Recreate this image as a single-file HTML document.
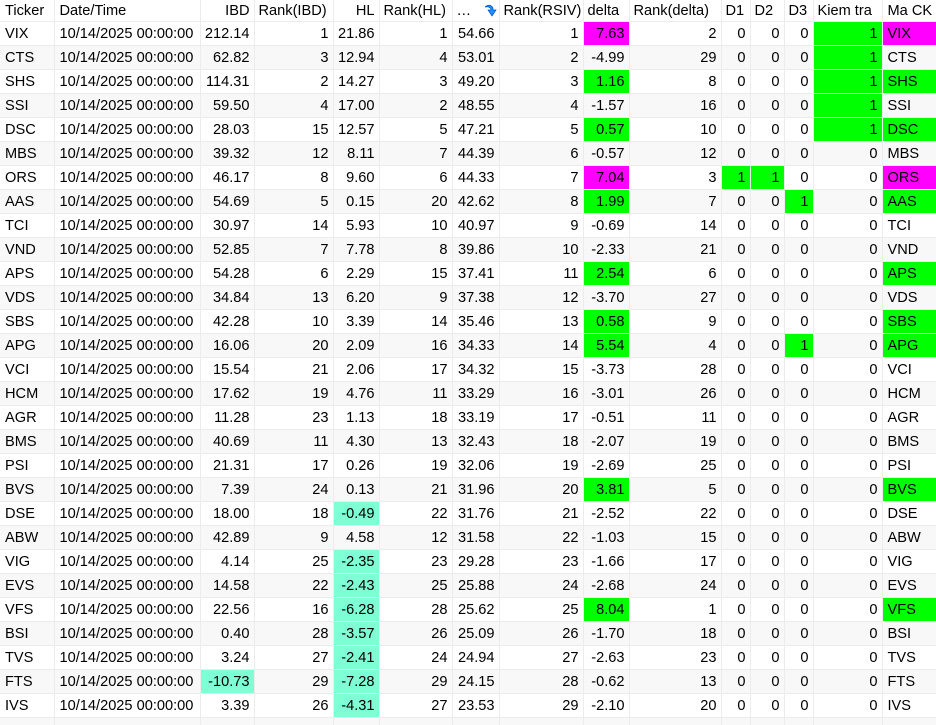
<!DOCTYPE html>
<html><head><meta charset="utf-8"><style>
html,body{margin:0;height:725px;overflow:hidden}
body{background:#fff;font-family:"Liberation Sans",sans-serif;font-size:14.6px;color:#000;}
table{border-collapse:collapse;table-layout:fixed;width:936px;}
td{height:23px;padding:0 4px;border-right:1px solid #ececec;border-bottom:1px solid #ececec;text-align:right;white-space:nowrap;overflow:hidden;}
tr:first-child td{height:21px;text-align:left;background:#fff;}
tr:nth-child(odd) td{background:#f8f8f8;}
tr:first-child td{background:#fff}
td:nth-child(1),td:nth-child(2),td:nth-child(15){text-align:left;padding-left:5px}
tr:first-child td.r{text-align:right}
tr td.m{background:#ff00ff}
tr td.g{background:#00ff00}
tr td.a{background:#7fffd4}
</style></head><body>
<table>
<colgroup><col style="width:54px"><col style="width:146px"><col style="width:54px"><col style="width:79px"><col style="width:46px"><col style="width:73px"><col style="width:47px"><col style="width:84px"><col style="width:46px"><col style="width:92px"><col style="width:29px"><col style="width:34px"><col style="width:29px"><col style="width:69px"><col style="width:54px"></colgroup>
<tr><td>Ticker</td><td>Date/Time</td><td class="r">IBD</td><td>Rank(IBD)</td><td class="r">HL</td><td>Rank(HL)</td><td>… <svg width="14" height="14" viewBox="0 0 14 14" style="vertical-align:-2px;margin-left:8px"><path d="M2 4 Q7 0 10 5 L10 7 L13 7 L9 13 L5 7 L8 7 L8 6 Q6 3 2 4Z" fill="#1e90ff" stroke="#0050c0" stroke-width="0.7"/></svg></td><td>Rank(RSIV)</td><td>delta</td><td>Rank(delta)</td><td>D1</td><td>D2</td><td>D3</td><td>Kiem tra</td><td>Ma CK</td></tr>
<tr><td>VIX</td><td>10/14/2025 00:00:00</td><td>212.14</td><td>1</td><td>21.86</td><td>1</td><td>54.66</td><td>1</td><td class="m">7.63</td><td>2</td><td>0</td><td>0</td><td>0</td><td class="g">1</td><td class="m">VIX</td></tr>
<tr><td>CTS</td><td>10/14/2025 00:00:00</td><td>62.82</td><td>3</td><td>12.94</td><td>4</td><td>53.01</td><td>2</td><td>-4.99</td><td>29</td><td>0</td><td>0</td><td>0</td><td class="g">1</td><td>CTS</td></tr>
<tr><td>SHS</td><td>10/14/2025 00:00:00</td><td>114.31</td><td>2</td><td>14.27</td><td>3</td><td>49.20</td><td>3</td><td class="g">1.16</td><td>8</td><td>0</td><td>0</td><td>0</td><td class="g">1</td><td class="g">SHS</td></tr>
<tr><td>SSI</td><td>10/14/2025 00:00:00</td><td>59.50</td><td>4</td><td>17.00</td><td>2</td><td>48.55</td><td>4</td><td>-1.57</td><td>16</td><td>0</td><td>0</td><td>0</td><td class="g">1</td><td>SSI</td></tr>
<tr><td>DSC</td><td>10/14/2025 00:00:00</td><td>28.03</td><td>15</td><td>12.57</td><td>5</td><td>47.21</td><td>5</td><td class="g">0.57</td><td>10</td><td>0</td><td>0</td><td>0</td><td class="g">1</td><td class="g">DSC</td></tr>
<tr><td>MBS</td><td>10/14/2025 00:00:00</td><td>39.32</td><td>12</td><td>8.11</td><td>7</td><td>44.39</td><td>6</td><td>-0.57</td><td>12</td><td>0</td><td>0</td><td>0</td><td>0</td><td>MBS</td></tr>
<tr><td>ORS</td><td>10/14/2025 00:00:00</td><td>46.17</td><td>8</td><td>9.60</td><td>6</td><td>44.33</td><td>7</td><td class="m">7.04</td><td>3</td><td class="g">1</td><td class="g">1</td><td>0</td><td>0</td><td class="m">ORS</td></tr>
<tr><td>AAS</td><td>10/14/2025 00:00:00</td><td>54.69</td><td>5</td><td>0.15</td><td>20</td><td>42.62</td><td>8</td><td class="g">1.99</td><td>7</td><td>0</td><td>0</td><td class="g">1</td><td>0</td><td class="g">AAS</td></tr>
<tr><td>TCI</td><td>10/14/2025 00:00:00</td><td>30.97</td><td>14</td><td>5.93</td><td>10</td><td>40.97</td><td>9</td><td>-0.69</td><td>14</td><td>0</td><td>0</td><td>0</td><td>0</td><td>TCI</td></tr>
<tr><td>VND</td><td>10/14/2025 00:00:00</td><td>52.85</td><td>7</td><td>7.78</td><td>8</td><td>39.86</td><td>10</td><td>-2.33</td><td>21</td><td>0</td><td>0</td><td>0</td><td>0</td><td>VND</td></tr>
<tr><td>APS</td><td>10/14/2025 00:00:00</td><td>54.28</td><td>6</td><td>2.29</td><td>15</td><td>37.41</td><td>11</td><td class="g">2.54</td><td>6</td><td>0</td><td>0</td><td>0</td><td>0</td><td class="g">APS</td></tr>
<tr><td>VDS</td><td>10/14/2025 00:00:00</td><td>34.84</td><td>13</td><td>6.20</td><td>9</td><td>37.38</td><td>12</td><td>-3.70</td><td>27</td><td>0</td><td>0</td><td>0</td><td>0</td><td>VDS</td></tr>
<tr><td>SBS</td><td>10/14/2025 00:00:00</td><td>42.28</td><td>10</td><td>3.39</td><td>14</td><td>35.46</td><td>13</td><td class="g">0.58</td><td>9</td><td>0</td><td>0</td><td>0</td><td>0</td><td class="g">SBS</td></tr>
<tr><td>APG</td><td>10/14/2025 00:00:00</td><td>16.06</td><td>20</td><td>2.09</td><td>16</td><td>34.33</td><td>14</td><td class="g">5.54</td><td>4</td><td>0</td><td>0</td><td class="g">1</td><td>0</td><td class="g">APG</td></tr>
<tr><td>VCI</td><td>10/14/2025 00:00:00</td><td>15.54</td><td>21</td><td>2.06</td><td>17</td><td>34.32</td><td>15</td><td>-3.73</td><td>28</td><td>0</td><td>0</td><td>0</td><td>0</td><td>VCI</td></tr>
<tr><td>HCM</td><td>10/14/2025 00:00:00</td><td>17.62</td><td>19</td><td>4.76</td><td>11</td><td>33.29</td><td>16</td><td>-3.01</td><td>26</td><td>0</td><td>0</td><td>0</td><td>0</td><td>HCM</td></tr>
<tr><td>AGR</td><td>10/14/2025 00:00:00</td><td>11.28</td><td>23</td><td>1.13</td><td>18</td><td>33.19</td><td>17</td><td>-0.51</td><td>11</td><td>0</td><td>0</td><td>0</td><td>0</td><td>AGR</td></tr>
<tr><td>BMS</td><td>10/14/2025 00:00:00</td><td>40.69</td><td>11</td><td>4.30</td><td>13</td><td>32.43</td><td>18</td><td>-2.07</td><td>19</td><td>0</td><td>0</td><td>0</td><td>0</td><td>BMS</td></tr>
<tr><td>PSI</td><td>10/14/2025 00:00:00</td><td>21.31</td><td>17</td><td>0.26</td><td>19</td><td>32.06</td><td>19</td><td>-2.69</td><td>25</td><td>0</td><td>0</td><td>0</td><td>0</td><td>PSI</td></tr>
<tr><td>BVS</td><td>10/14/2025 00:00:00</td><td>7.39</td><td>24</td><td>0.13</td><td>21</td><td>31.96</td><td>20</td><td class="g">3.81</td><td>5</td><td>0</td><td>0</td><td>0</td><td>0</td><td class="g">BVS</td></tr>
<tr><td>DSE</td><td>10/14/2025 00:00:00</td><td>18.00</td><td>18</td><td class="a">-0.49</td><td>22</td><td>31.76</td><td>21</td><td>-2.52</td><td>22</td><td>0</td><td>0</td><td>0</td><td>0</td><td>DSE</td></tr>
<tr><td>ABW</td><td>10/14/2025 00:00:00</td><td>42.89</td><td>9</td><td>4.58</td><td>12</td><td>31.58</td><td>22</td><td>-1.03</td><td>15</td><td>0</td><td>0</td><td>0</td><td>0</td><td>ABW</td></tr>
<tr><td>VIG</td><td>10/14/2025 00:00:00</td><td>4.14</td><td>25</td><td class="a">-2.35</td><td>23</td><td>29.28</td><td>23</td><td>-1.66</td><td>17</td><td>0</td><td>0</td><td>0</td><td>0</td><td>VIG</td></tr>
<tr><td>EVS</td><td>10/14/2025 00:00:00</td><td>14.58</td><td>22</td><td class="a">-2.43</td><td>25</td><td>25.88</td><td>24</td><td>-2.68</td><td>24</td><td>0</td><td>0</td><td>0</td><td>0</td><td>EVS</td></tr>
<tr><td>VFS</td><td>10/14/2025 00:00:00</td><td>22.56</td><td>16</td><td class="a">-6.28</td><td>28</td><td>25.62</td><td>25</td><td class="g">8.04</td><td>1</td><td>0</td><td>0</td><td>0</td><td>0</td><td class="g">VFS</td></tr>
<tr><td>BSI</td><td>10/14/2025 00:00:00</td><td>0.40</td><td>28</td><td class="a">-3.57</td><td>26</td><td>25.09</td><td>26</td><td>-1.70</td><td>18</td><td>0</td><td>0</td><td>0</td><td>0</td><td>BSI</td></tr>
<tr><td>TVS</td><td>10/14/2025 00:00:00</td><td>3.24</td><td>27</td><td class="a">-2.41</td><td>24</td><td>24.94</td><td>27</td><td>-2.63</td><td>23</td><td>0</td><td>0</td><td>0</td><td>0</td><td>TVS</td></tr>
<tr><td>FTS</td><td>10/14/2025 00:00:00</td><td class="a">-10.73</td><td>29</td><td class="a">-7.28</td><td>29</td><td>24.15</td><td>28</td><td>-0.62</td><td>13</td><td>0</td><td>0</td><td>0</td><td>0</td><td>FTS</td></tr>
<tr><td>IVS</td><td>10/14/2025 00:00:00</td><td>3.39</td><td>26</td><td class="a">-4.31</td><td>27</td><td>23.53</td><td>29</td><td>-2.10</td><td>20</td><td>0</td><td>0</td><td>0</td><td>0</td><td>IVS</td></tr>
<tr><td></td><td></td><td></td><td></td><td></td><td></td><td></td><td></td><td></td><td></td><td></td><td></td><td></td><td></td><td></td></tr>
</table>
</body></html>
